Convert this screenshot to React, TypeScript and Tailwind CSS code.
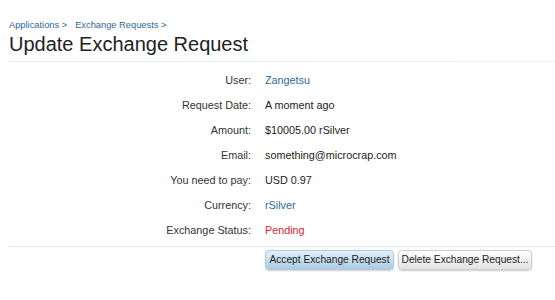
import React from "react";

const rows: { label: string; value: string; tone?: "link" | "danger" }[] = [
  { label: "User:", value: "Zangetsu", tone: "link" },
  { label: "Request Date:", value: "A moment ago" },
  { label: "Amount:", value: "$10005.00 rSilver" },
  { label: "Email:", value: "something@microcrap.com" },
  { label: "You need to pay:", value: "USD 0.97" },
  { label: "Currency:", value: "rSilver", tone: "link" },
  { label: "Exchange Status:", value: "Pending", tone: "danger" },
];

export default function App() {
  return (
    <div className="w-[555px] h-[300px] bg-white overflow-hidden font-['Liberation_Sans',Arial,sans-serif] text-[#222]">
      {/* Breadcrumb */}
      <div className="pl-[9px] pt-[19px] flex gap-[8px] text-[9.3px] leading-[12px] text-[#2e6a9a]">
        <span>Applications &gt;</span>
        <span>Exchange Requests &gt;</span>
      </div>

      {/* Title */}
      <h1 className="pl-[9px] mt-[1px] text-[20px] leading-[24px] text-[#222]">
        Update Exchange Request
      </h1>
      <div className="ml-[9px] mt-[5px] h-px bg-gradient-to-r from-[#e3ecf0] via-[#e6eef2] to-[#edf3f5]" />

      {/* Details */}
      <div className="mt-[6px] flex flex-col">
        {rows.map((row) => (
          <div key={row.label} className="flex h-[25px] items-center text-[10.8px]">
            <div className="w-[251px] text-right text-[#333]">{row.label}</div>
            <div
              className={`pl-[14px] ${
                row.tone === "link"
                  ? "text-[#2e6a9a]"
                  : row.tone === "danger"
                  ? "text-[#d9262b]"
                  : "text-[#222]"
              }`}
            >
              {row.value}
            </div>
          </div>
        ))}
      </div>

      <div className="ml-[9px] mt-[3px] h-px bg-[#d9eef1]" />

      {/* Actions */}
      <div className="pl-[265px] mt-[3px] flex gap-[4px] text-[10.2px]">
        <button className="h-[20px] w-[129px] whitespace-nowrap rounded-[4px] border border-[#b4cbdc] bg-gradient-to-b from-[#e2f0fa] to-[#a9cbe3] text-[#222] shadow-[0_1px_2px_rgba(0,0,0,0.2)]">
          Accept Exchange Request
        </button>
        <button className="h-[20px] w-[134px] whitespace-nowrap rounded-[4px] border border-[#cfcfcf] bg-gradient-to-b from-[#ffffff] to-[#e3e3e3] text-[#222] shadow-[0_1px_2px_rgba(0,0,0,0.2)]">
          Delete Exchange Request...
        </button>
      </div>
    </div>
  );
}
